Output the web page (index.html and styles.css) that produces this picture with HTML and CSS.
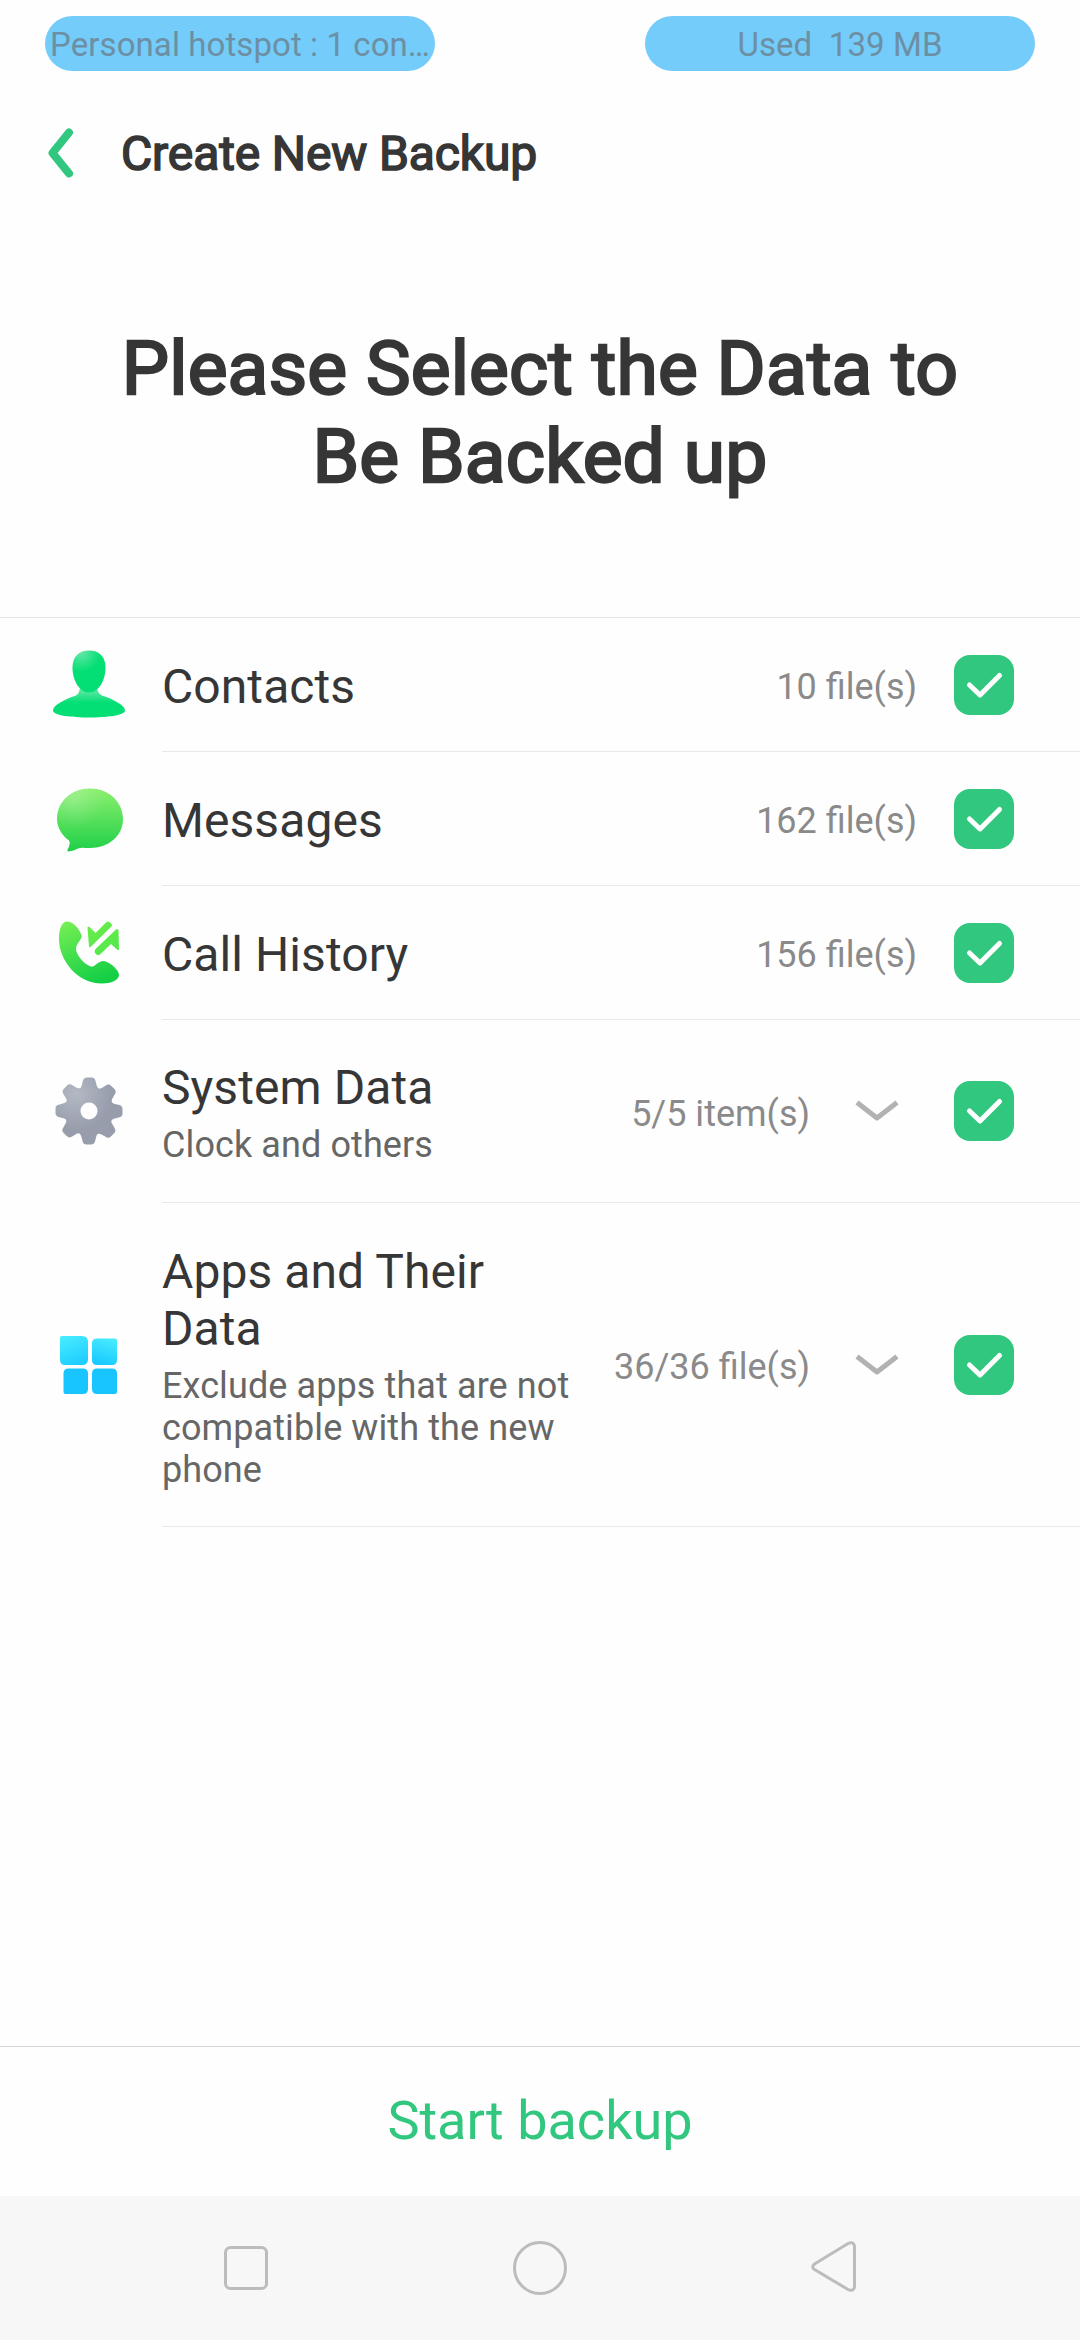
FILE: index.html
```html
<!DOCTYPE html>
<html lang="en">
<head>
<meta charset="UTF-8">
<meta name="viewport" content="width=device-width, initial-scale=1.0">
<title>Create New Backup</title>
<link rel="stylesheet" href="styles.css">
</head>
<body>
<div class="status-bar">
<div class="pill">Personal hotspot : 1 con…</div>
<div class="pill">Used&nbsp; 139 MB</div>
</div>

<header class="title-bar">
<svg class="back" width="28" height="52" viewBox="0 0 28 52"><path d="M23 5.500L6.500 26L23 46.500" fill="none" stroke="#31c77f" stroke-width="8" stroke-linecap="round" stroke-linejoin="round"/></svg>
<span class="title">Create New Backup</span>
</header>

<h1>Please Select the Data to<br>Be Backed up</h1>

<main class="list">
<div class="item">
<svg class="icon" width="90" height="90" viewBox="0 3.500 90 90">
<defs>
<radialGradient id="head" gradientUnits="userSpaceOnUse" cx="37" cy="15" r="20"><stop offset="0" stop-color="#66e8a8"/><stop offset="1" stop-color="#04df75"/></radialGradient>
<linearGradient id="neck" gradientUnits="userSpaceOnUse" x1="0" y1="51" x2="0" y2="66"><stop offset="0" stop-color="#6feaae"/><stop offset="1" stop-color="#04df75"/></linearGradient>
</defs>
<path d="M36 49H53Q53 57 58 59C70 63 81 69 81 74C81 79 62 81 45 81S9 79 9 74C9 69 20 63 32 59Q36 57 36 49Z" fill="url(#neck)"/>
<path d="M45 14C55 14 61.500 20 61.500 31C61.500 45 54 56 45 56S28.500 45 28.500 31C28.500 20 35 14 45 14Z" fill="url(#head)"/>
</svg>
<div class="info"><div class="name">Contacts</div></div>
<div class="count">10 file(s)</div>
<div class="check"><svg width="60" height="60" viewBox="0 0 60 60"><path d="M15.500 30L26 40L45.500 20.500"/></svg></div>
</div>

<div class="item">
<svg class="icon" width="90" height="90" viewBox="0 3.500 90 90">
<defs>
<linearGradient id="bubble" x1="0" y1="0" x2="0" y2="1"><stop offset="0" stop-color="#8cef6e"/><stop offset="1" stop-color="#1fd048"/></linearGradient>
<radialGradient id="shine" gradientUnits="userSpaceOnUse" cx="30" cy="28" r="30"><stop offset="0" stop-color="#fff" stop-opacity=".2"/><stop offset="1" stop-color="#fff" stop-opacity="0"/></radialGradient>
</defs>
<path d="M46 18C64.500 18 79 31 79 48.500S64 77.500 46 77.500C41 77.500 37 76.500 34 78C30 80 27 81 24 81Q23 81 23.500 79Q27 73 25 70C18 65 13 57 13 48.500C13 31 27.500 18 46 18Z" fill="url(#bubble)"/>
<path d="M46 18C64.500 18 79 31 79 48.500S64 77.500 46 77.500C41 77.500 37 76.500 34 78C30 80 27 81 24 81Q23 81 23.500 79Q27 73 25 70C18 65 13 57 13 48.500C13 31 27.500 18 46 18Z" fill="url(#shine)"/>
</svg>
<div class="info"><div class="name">Messages</div></div>
<div class="count">162 file(s)</div>
<div class="check"><svg width="60" height="60" viewBox="0 0 60 60"><path d="M15.500 30L26 40L45.500 20.500"/></svg></div>
</div>

<div class="item">
<svg class="icon" width="90" height="90" viewBox="0 0 90 90">
<defs>
<linearGradient id="phone" gradientUnits="userSpaceOnUse" x1="25" y1="13" x2="50" y2="75"><stop offset="0" stop-color="#74ef53"/><stop offset="1" stop-color="#14cf46"/></linearGradient>
<linearGradient id="arrows" gradientUnits="userSpaceOnUse" x1="45" y1="13" x2="60" y2="47"><stop offset="0" stop-color="#68ee49"/><stop offset="1" stop-color="#55e84c"/></linearGradient>
</defs>
<path d="M23 13.500C29 13.500 35 20 37.500 27C39 31 32 35 32 41C32 47 41 57 47 58.500C51 59.500 54 52.500 60 53C66 54 75 62 75 67C75 72 67 75.500 58 75.500C33 75.500 15 52 15 31C15 20 18 13.500 23 13.500Z" fill="url(#phone)"/>
<g fill="url(#arrows)">
<path d="M43.500 20Q43.500 17.500 45.500 19L51.500 25L62 14.500Q64 12.500 66 14.500L67 15.500Q69 17.500 67 19.500L48 38.500Q45.500 40.500 45 38Z"/>
<path d="M51.500 41L72 21.500Q74.500 20 74.500 23L75 41Q74.500 43 73 41.500L67 36L56 46.500Q54 48 52.500 46.500L51 45Q50 43 51.500 41Z"/>
</g>
<path d="M46 42L70 18.500" stroke="#fefefe" stroke-width="3.500" fill="none"/>
</svg>
<div class="info"><div class="name">Call History</div></div>
<div class="count">156 file(s)</div>
<div class="check"><svg width="60" height="60" viewBox="0 0 60 60"><path d="M15.500 30L26 40L45.500 20.500"/></svg></div>
</div>

<div class="item item-system">
<svg class="icon" width="90" height="90" viewBox="0 0 90 90">
<defs>
<radialGradient id="gear" gradientUnits="userSpaceOnUse" cx="32" cy="28" r="36"><stop offset="0" stop-color="#b3b8c4"/><stop offset="1" stop-color="#979dab"/></radialGradient>
<path id="tooth" d="M35.500 24Q38 20.500 38.700 15.500Q39.500 11.500 43 11.500H47.500Q51 11.500 51.600 15.500Q52.500 20.500 55 24Z"/>
<mask id="gear-shape" maskUnits="userSpaceOnUse" x="0" y="0" width="90" height="90">
<g fill="#fff">
<circle cx="45" cy="45" r="24.500"/>
<use href="#tooth"/>
<use href="#tooth" transform="rotate(45 45 45)"/>
<use href="#tooth" transform="rotate(90 45 45)"/>
<use href="#tooth" transform="rotate(135 45 45)"/>
<use href="#tooth" transform="rotate(180 45 45)"/>
<use href="#tooth" transform="rotate(225 45 45)"/>
<use href="#tooth" transform="rotate(270 45 45)"/>
<use href="#tooth" transform="rotate(315 45 45)"/>
</g>
<circle cx="45" cy="45" r="8.500" fill="#000"/>
</mask>
</defs>
<rect width="90" height="90" fill="url(#gear)" mask="url(#gear-shape)"/>
</svg>
<div class="info">
<div class="name">System Data</div>
<div class="desc">Clock and others</div>
</div>
<div class="count">5/5 item(s)</div>
<svg class="arrow" width="44" height="24" viewBox="0 0 44 24"><path d="M2 3.500L22 19L42 3.500"/></svg>
<div class="check"><svg width="60" height="60" viewBox="0 0 60 60"><path d="M15.500 30L26 40L45.500 20.500"/></svg></div>
</div>

<div class="item item-apps">
<svg class="icon" width="90" height="90" viewBox="0 0 90 90">
<defs>
<linearGradient id="tiles" gradientUnits="userSpaceOnUse" x1="20" y1="16" x2="34" y2="50"><stop offset="0" stop-color="#48ecff"/><stop offset="1" stop-color="#18c8ff"/></linearGradient>
<linearGradient id="tiles-right" gradientUnits="userSpaceOnUse" x1="66" y1="18" x2="58" y2="45"><stop offset="0" stop-color="#48ecff"/><stop offset="1" stop-color="#18c8ff"/></linearGradient>
</defs>
<path d="M18 16H38Q44 16 44 22V39Q44 45 38 45H21Q16 45 16 40V18Q16 16 18 16Z" fill="url(#tiles)"/>
<path d="M53 18.500H71Q73 18.500 73 20.500V40Q73 45 68 45H53Q48 45 48 40V23.500Q48 18.500 53 18.500Z" fill="url(#tiles-right)"/>
<path d="M24.500 48.500H39Q44 48.500 44 53.500V69Q44 74 39 74H21.500Q19.500 74 19.500 72V53.500Q19.500 48.500 24.500 48.500Z" fill="#18c5ff"/>
<path d="M53 48.500H68Q73 48.500 73 53.500V72Q73 74 71 74H53Q48 74 48 69V53.500Q48 48.500 53 48.500Z" fill="#18c5ff"/>
</svg>
<div class="info">
<div class="name">Apps and Their Data</div>
<div class="desc">Exclude apps that are not compatible with the new phone</div>
</div>
<div class="count">36/36 file(s)</div>
<svg class="arrow" width="44" height="24" viewBox="0 0 44 24"><path d="M2 3.500L22 19L42 3.500"/></svg>
<div class="check"><svg width="60" height="60" viewBox="0 0 60 60"><path d="M15.500 30L26 40L45.500 20.500"/></svg></div>
</div>
</main>

<button class="start" type="button">Start backup</button>

<nav class="nav-bar">
<svg width="60" height="60" viewBox="0 0 60 60"><rect x="9.500" y="9.500" width="41" height="41" rx="5"/></svg>
<svg width="60" height="60" viewBox="0 0 60 60"><circle cx="30" cy="30" r="25.500"/></svg>
<svg width="60" height="60" viewBox="0 0 60 60"><path d="M10.500 26L44 5.500Q49.500 3 50.500 8V49Q49.500 54 44 51.500L10.500 31.500Q7 29 10.500 26Z"/></svg>
</nav>
</body>
</html>
```
FILE: styles.css
```css
* {
box-sizing: border-box;
}
body {
margin: 0;
width: 1080px;
height: 2340px;
display: flex;
flex-direction: column;
font-family: Roboto, sans-serif;
background-color: #fefefe;
color: #363636;
overflow: hidden;
}
svg {
display: block;
flex-shrink: 0;
}
.status-bar {
display: flex;
justify-content: space-between;
padding: 16px 45px 0;
}
.pill {
width: 390px;
height: 55px;
border-radius: 28px;
background-color: #74ccfa;
color: #6d8fa3;
font-size: 33px;
line-height: 57px;
letter-spacing: 0.08px;
text-align: center;
white-space: nowrap;
}
.title-bar {
display: flex;
align-items: center;
height: 164px;
padding-left: 46px;
}
.title {
margin-left: 47px;
font-size: 48px;
letter-spacing: -0.12px;
-webkit-text-stroke: 1.6px #363636;
}
h1 {
height: 382px;
margin: 0;
padding-top: 89px;
font-size: 75px;
font-weight: 400;
line-height: 88px;
letter-spacing: 0.15px;
text-align: center;
-webkit-text-stroke: 2.4px #363636;
}
.list {
flex: 1;
border-top: 1px solid #e6e6e6;
}
.item {
display: flex;
align-items: center;
height: 134px;
padding: 0 66px 0 44px;
/* divider starts under the text, not under the icon */
background: linear-gradient(#e9e9e9, #e9e9e9) 162px 100% / 918px 1px no-repeat;
}
.item-system {
height: 183px;
padding-bottom: 1px;
}
.item-apps {
height: 324px;
}
.info {
flex: 1;
margin-left: 28px;
padding-top: 3px;
}
.name {
font-size: 48px;
line-height: 57px;
letter-spacing: 0.08px;
}
.desc {
margin-top: 8px;
font-size: 36px;
line-height: 42px;
letter-spacing: 0.1px;
color: #666;
}
.count {
margin-left: 32px;
padding-top: 3px;
font-size: 36px;
line-height: 42px;
color: #8a8a8a;
}
.item-system .count {
padding-top: 5px;
}
.arrow {
margin-left: 45px;
}
.arrow path {
fill: none;
stroke: #b2b2b2;
stroke-width: 5;
stroke-linejoin: round;
}
.check {
width: 60px;
height: 60px;
margin-left: 37px;
border-radius: 16px;
background-color: #31c77f;
}
.arrow + .check {
margin-left: 55px;
}
.check path {
fill: none;
stroke: #fff;
stroke-width: 5;
stroke-linecap: round;
stroke-linejoin: round;
}
.start {
height: 150px;
padding: 0 0 3px;
border: none;
border-top: 1px solid #d6d6d6;
background: none;
font-family: inherit;
font-size: 54px;
color: #31c77f;
}
.nav-bar {
display: flex;
align-items: center;
justify-content: space-between;
height: 144px;
padding: 0 216px;
background-color: #f7f7f7;
}
.nav-bar svg {
fill: none;
stroke: #bcbcbc;
stroke-width: 3;
}
```
